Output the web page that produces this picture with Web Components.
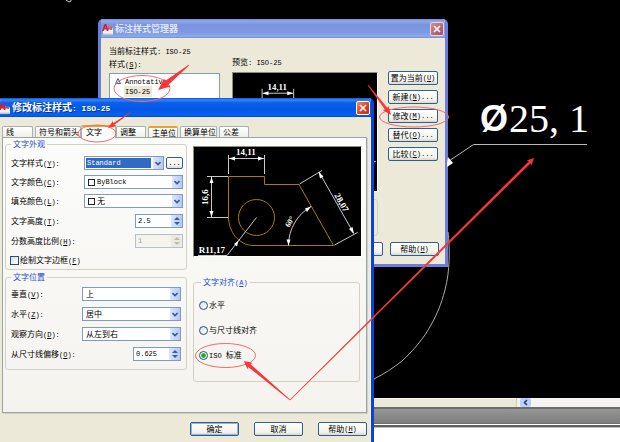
<!DOCTYPE html>
<html lang="zh-CN">
<head>
<meta charset="utf-8">
<title>修改标注样式: ISO-25</title>
<style>
html, body { height: 100%; margin: 0; }
body { background: #000; overflow: hidden; }
</style>
</head>
<body>
<cad-desktop></cad-desktop>
<script>
const BASE = `
  *, *::before, *::after { box-sizing: border-box; }
  .a { font-family: "Liberation Mono", monospace; font-size: 7px; white-space: pre; }
  button, input, select { font: inherit; color: inherit; margin: 0; padding: 0; border-radius: 0; }
`;
/* Wraps Latin runs in a monospace span; "_X" marks the mnemonic letter X. */
const fmt = s => (s || '').replace(/[\x20-\x7e]+/g, m =>
  `<span class="a">${m.replace(/_(.)/g, '<u>$1</u>')}</span>`);

function define(name, css, html, after) {
  customElements.define(name, class extends HTMLElement {
    connectedCallback() {
      if (this.shadowRoot) return;
      const get = (n, d = '') => this.getAttribute(n) ?? d;
      const root = this.attachShadow({ mode: 'open' });
      root.innerHTML = `<style>${BASE}${css}</style>${html(get, this)}`;
      if (after) after(root, get, this);
    }
  });
}

define('xp-text', `:host { display: block; line-height: 12px; white-space: nowrap; }`,
  g => fmt(g('text')));

define('xp-button', `
  :host { display: block; height: 14px; }
  button { width: 100%; height: 100%; display: flex; align-items: center; justify-content: center;
    border: 1px solid #2f5f90; border-radius: 2px; background: linear-gradient(#fff, #f3f2ec 75%, #dcd8cb);
    line-height: 12px; white-space: nowrap; overflow: hidden; outline: 0; }
  :host([primary]) button { box-shadow: inset 0 0 0 1px #93b3ea; }
`, g => `<button type="button" aria-label="${g('name', g('text').replace('_', ''))}">${fmt(g('text'))}</button>`);

define('app-icon', `:host { display: block; width: 11px; height: 11px; } svg { display: block; }`,
  () => `<svg width="11" height="11" viewBox="0 0 11 11" aria-hidden="true">
    <path d="M1 5h8l2-1v6l-1 1H1z" fill="#f4f2f2"/><path d="M1 9.500h9.500V11H1z" fill="#c9c3cf"/>
    <path d="M0 7 2.500 0h1.800L6.500 7H4.800l-.5-1.500h-2L1.800 7zM2.800 4.200h1L3.300 2.200z" fill="#d8222a"/>
    <path d="M6 2.500h1.500V6H6zM8.200 3.200h2V6h-2z" fill="#e0525a"/></svg>`);

define('xp-window', `
  :host { display: flex; flex-direction: column; border: 3px solid #6a7ede; border-top: 0;
    border-radius: 5px 5px 0 0; background: #ece9d8; overflow: hidden; }
  :host([active]) { border-color: #0a41e2; box-shadow: inset -1px 0 #f7f4e6; }
  header { display: flex; align-items: center; gap: 2px; height: 19px; flex: none; margin: 0 -2px;
    padding: 1px 3px 0 3px; color: #dfe6fb; font-size: 9px; font-weight: bold;
    background: linear-gradient(#6f87d6, #90a8ec 10%, #7b93de 30%, #7e9ae2 70%, #8aa9ea 92%, #7288d8); }
  :host([active]) header { padding-left: 1px; color: #fff; font-size: 10px; text-shadow: 1px 1px #0a3598;
    background: linear-gradient(#1150cf, #3487fb 10%, #0b5fea 25%, #0457e4 60%, #0563f6 90%, #0347c9); }
  header .a { font-size: 8px; }
  h1 { flex: 1; margin: 0; font: inherit; line-height: 14px; white-space: nowrap; }
  header button { width: 14px; height: 14px; border: 1px solid #e6d8e6; border-radius: 2px; display: grid;
    place-items: center; background: linear-gradient(135deg, #cf8d93, #a84a5a); }
  :host([active]) header button { border-color: #fff; background: linear-gradient(135deg, #f0896a, #d8401c 60%, #c03010); }
  main { flex: 1; display: flex; flex-direction: column; min-height: 0; }
`, g => `<header><app-icon></app-icon><h1>${fmt(g('title-text'))}</h1>
  <button type="button" aria-label="关闭窗口"><svg width="8" height="8" viewBox="0 0 8 8"><path d="M1 1l6 6M7 1L1 7" stroke="#fff" stroke-width="1.600"/></svg></button>
  </header><main><slot></slot></main>`);

define('xp-group', `
  :host { display: block; }
  fieldset { margin: 0; min-width: 0; border: 1px solid #d3d2c2; border-radius: 3px; padding: var(--pad); }
  legend { margin-left: var(--legend-left, 2px); padding: 0 2px; color: #1a4bd0; line-height: 12px; white-space: nowrap; }
  div { display: flex; flex-direction: column; gap: var(--row-gap, 5px); }
`, g => `<fieldset><legend>${fmt(g('legend'))}</legend><div><slot></slot></div></fieldset>`);

const CHEVRON = `<svg width="6" height="5" viewBox="0 0 6 5"><path d="M.5 1 3 3.500 5.500 1" fill="none" stroke="#3f5b94" stroke-width="1.600"/></svg>`;

define('xp-select', `
  :host { display: flex; align-items: center; height: 14px; justify-content: space-between; }
  label { line-height: 12px; white-space: nowrap; }
  .row { display: flex; gap: 2px; width: var(--field, 99px); height: 14px; }
  .box { flex: 1; min-width: 0; display: grid; grid-template: 100% / 100%; border: 1px solid #7f9db9; background: #fff; height: 14px; }
  .box > * { grid-area: 1 / 1; }
  select { appearance: none; border: 0; outline: 0; width: 100%; height: 12px; line-height: 12px; padding-left: 3px; background: transparent; }
  select.latin { font-family: "Liberation Mono", monospace; font-size: 7px; }
  select.swatched { padding-left: 12px; }
  select.focus { margin: 1px 0 0 1px; height: 10px; line-height: 10px; padding-left: 1px; width: calc(100% - 13px); background: #316ac5; color: #fff; }
  i { justify-self: start; align-self: center; width: 7px; height: 7px; margin-left: 3px; border: 1px solid #222; pointer-events: none; }
  b { justify-self: end; width: 10px; height: 12px; display: grid; place-items: center; pointer-events: none;
    background: linear-gradient(90deg, #dce6fe, #b4c9f8); }
  xp-button { width: 17px; height: 12px; margin-top: 1px; }
`, g => `<label for="f">${fmt(g('label'))}</label><div class="row"><div class="box">
  <select id="f" class="${/^[\x20-\x7e]+$/.test(g('value')) ? 'latin' : ''} ${g('kind')}"><option>${g('value')}</option></select>
  ${g('kind') === 'swatched' ? '<i></i>' : ''}<b>${CHEVRON}</b></div>
  ${g('kind') === 'focus' ? '<xp-button text="..." name="浏览"></xp-button>' : ''}</div>`);

define('xp-spin', `
  :host { display: flex; align-items: center; height: 14px; justify-content: space-between; margin-top: var(--spin-top, 1px); }
  label { line-height: 12px; white-space: nowrap; }
  .box { display: flex; width: 48px; height: 14px; border: 1px solid #7f9db9; background: #fff; }
  input { flex: 1; min-width: 0; border: 0; outline: 0; padding-left: 2px; background: transparent;
    font-family: "Liberation Mono", monospace; font-size: 7px; }
  .btns { width: 11px; display: grid; grid-template-rows: 1fr 1fr; }
  button { border: 0; display: grid; place-items: center; background: linear-gradient(90deg, #dce6fe, #b4c9f8); color: #3f5b94; }
  :host([off]) .box { background: #f4f3ec; border-color: #b3c1cf; }
  :host([off]) input { color: #a09f92; }
  :host([off]) button { background: #eceade; color: #bbb9a9; }
  svg { display: block; }
`, g => { const d = g('off', null) !== null ? 'disabled' : ''; return `<label for="f">${fmt(g('label'))}</label>
  <div class="box"><input id="f" type="text" value="${g('value')}" ${d}><div class="btns">
  <button type="button" aria-label="增加" ${d}><svg width="6" height="4"><path d="M0 4 3 1l3 3z" fill="currentColor"/></svg></button>
  <button type="button" aria-label="减少" ${d}><svg width="6" height="4"><path d="M0 0h6L3 3z" fill="currentColor"/></svg></button>
  </div></div>`; });

define('xp-choice', `
  :host { display: block; height: 14px; }
  label { display: flex; align-items: center; gap: 1px; height: 14px; line-height: 12px; white-space: nowrap; }
  input { appearance: none; flex: none; width: 9px; height: 9px; border: 1px solid #1d5281; background: linear-gradient(135deg, #dcdcd7, #fff); }
  input[type=radio] { border-radius: 50%; }
  input[type=radio]:checked { background: radial-gradient(circle, #21a121 0 1px, #3fbf3f 2px, #fff 3px); }
`, g => `<label><input type="${g('kind')}" name="align" ${g('on', null) !== null ? 'checked' : ''}><span>${fmt(g('text'))}</span></label>`);

define('xp-tabs', `
  :host { display: flex; align-items: flex-end; height: 12px; }
  button { height: 11px; padding: 0 0 0 3px; text-align: left; border: 1px solid #a5b2b8; border-bottom: 0; border-radius: 2px 2px 0 0;
    background: linear-gradient(#fff, #f0efe6); line-height: 10px; white-space: nowrap; overflow: hidden; margin-right: 2px; }
  .hot { border-top: 2px solid #f0a030; line-height: 9px; }
  .on { height: 13px; margin: 0 0 -1px -2px; background: #fbfbf9; border-top: 2px solid #f0a030; position: relative; line-height: 9px; padding-bottom: 2px; padding-left: 4px; }
`, () => [['线', 31], ['符号和箭头', 46], ['文字', 35, 'on'], ['调整', 30], ['主单位', 30, 'hot'], ['换算单位', 37], ['公差', 30]]
  .map(([t, w, c = '']) => `<button type="button" role="tab" class="${c}" style="width:${w}px">${t}</button>`).join(''));

define('dim-preview', `
  :host { display: block; border: 1px solid #8d8c80; border-right-color: #fff; border-bottom-color: #fff; background: #000; }
  svg { display: block; width: 100%; height: auto; }
  text { font: bold 8px "Liberation Serif", serif; fill: #fff; text-anchor: middle; }
`, () => `<svg viewBox="194 147 167 109" role="img" aria-label="标注预览">
  <g fill="none" stroke="#a87a10">
    <path d="M228.500 217V176.500h36v8h34.500L333.500 245.500H253C239 245 228.500 232 228.500 217z"/><circle cx="256.500" cy="217.500" r="18"/></g>
  <g fill="none" stroke="#c8c8c8">
    <path d="M228.500 155v19M264.500 155v19M229 158.500h35M207 176.500h21M207 217.500h21M211.500 177v40"/>
    <path d="M256.500 217.500 227 255.500h-29M299.500 184 322 170.500M334.500 245l23-12.500M319 172l34.500 61M288.500 245.500A45 45 0 0 1 311 206.500"/></g>
  <path fill="#fff" d="M229 158.500l6-2v4zM264 158.500l-6-2v4zM211.500 177l-2 6h4zM211.500 217l-2-6h4zM238.500 240.500l-1.500 6-3-2.500zM318.500 171.500l5 5-3.500 2zM354 234l-5-5 3.500-2zM288.500 245.500l-2-6h4zM311 206.500l-6 2 2 3.500z"/>
  <text x="246" y="155" style="font-size:9px">14,11</text><text x="212" y="253" style="font-size:9px">R11,17</text>
  <text transform="translate(208 197) rotate(-90)" style="font-size:9px">16,6</text>
  <text transform="translate(292 223) rotate(-60)">60°</text>
  <text transform="translate(339 204) rotate(60)" style="font-size:9px">28,07</text></svg>`);

define('style-manager', `
  xp-window { height: 100%; }
  :host { display: block; }
  .cols { display: grid; grid-template-columns: 111px 1fr 50px; column-gap: 10px; padding: 19px 7px 0 8px; }
  .left, .mid, .cmds { display: flex; flex-direction: column; }
  .left xp-text:first-child { margin: -12px 0 0; }
  .mid { margin-top: -1px; padding-left: 2px; }
  .list { margin: 2px 0 0; padding: 2px 5px; list-style: none; background: #fff; border: 1px solid #7f9db9; height: 120px; }
  li { display: flex; align-items: center; height: 10px; gap: 4px; }
  li svg { width: 6px; height: 6px; }
  li span { display: block; width: 6px; }
  li.sel xp-text { background: #ece9d8; padding: 0 1px; margin-left: -1px; line-height: 10px; width: 28px; }
  .pv { margin-top: 3px; height: 120px; background: #000; border: 1px solid #8d8c80; border-right-color: #fff; border-bottom-color: #fff; }
  .pv svg { display: block; width: 100%; height: 118px; }
  .pv text { font: bold 9px "Liberation Serif", serif; fill: #fff; }
  .cmds { gap: 5px; padding-top: 14px; }
  .note { margin: 6px 67px 0 8px; height: 37px; border: 1px solid #d3d2c2; border-radius: 3px; }
  footer { display: flex; justify-content: flex-end; gap: 7px; padding: 6px 6px 0; }
  footer xp-button { width: 49px; }
`, () => `<xp-window title-text="标注样式管理器">
  <div class="cols">
   <div class="left"><xp-text text="当前标注样式: ISO-25"></xp-text><xp-text text="样式(_S):"></xp-text>
    <ul class="list"><li><svg viewBox="0 0 6 6"><path d="M3 .5 5.500 5.500h-5z" fill="#dfe9f5" stroke="#3a6ea5"/></svg><xp-text text="Annotative"></xp-text></li>
    <li class="sel"><span></span><xp-text text="ISO-25"></xp-text></li><li><span></span><xp-text text="Standard"></xp-text></li></ul></div>
   <div class="mid"><xp-text text="预览: ISO-25"></xp-text><div class="pv"><svg viewBox="0 0 146 118" preserveAspectRatio="xMinYMin">
     <path d="M29.500 16v18M61.500 16v18M30 20.500h31M141 90.500l4-1" stroke="#ccc" fill="none"/><path d="M30 20.500l6-2v4zM61 20.500l-6-2v4z" fill="#fff"/>
     <text x="35" y="17">14,11</text></svg></div></div>
   <div class="cmds"><xp-button text="置为当前(_U)"></xp-button><xp-button text="新建(_N)..."></xp-button><xp-button text="修改(_M)..."></xp-button><xp-button text="替代(_O)..."></xp-button><xp-button text="比较(_C)..."></xp-button></div>
  </div><div class="note"></div>
  <footer><xp-button name="关闭"></xp-button><xp-button text="帮助(_H)"></xp-button></footer></xp-window>`);

define('modify-dialog', `
  :host { display: block; }
  xp-window { height: 100%; }
  .body { flex: 1; display: flex; flex-direction: column; padding: 8px 4px 6px 2px; }
  .page { flex: 1; display: grid; grid-template-columns: 182fr 169fr; column-gap: 6px; padding: 0 4px 0 2px;
    border: 1px solid #98a4a8; box-shadow: 1px 1px #d2d0c2; background: linear-gradient(#fcfcfb, #f4f3ee); }
  .col { display: flex; flex-direction: column; }
  .look { --pad: 6px 3px 2px 3px; }
  .look xp-choice { margin: 0 0 0 1px; }
  .place { --pad: 4px 5px 8px 3px; --row-gap: 6px; --spin-top: 0px; margin-top: 1px; }
  .place xp-select, .look xp-select, .place xp-spin, .look xp-spin { padding-left: 2px; }
  .align { --pad: 9px 3px 19px 5px; --row-gap: 11px; margin: 19px 2px 0 0; }
  dim-preview { margin-top: 8px; }
  footer { display: flex; justify-content: flex-end; gap: 15px; padding-top: 9px; }
  footer xp-button { width: 49px; }
`, () => `<xp-window active title-text="修改标注样式: ISO-25"><div class="body">
  <xp-tabs role="tablist"></xp-tabs>
  <div class="page"><div class="col">
   <xp-group class="look" legend="文字外观">
    <xp-select label="文字样式(_Y):" value="Standard" kind="focus"></xp-select>
    <xp-select label="文字颜色(_C):" value="ByBlock" kind="swatched"></xp-select>
    <xp-select label="填充颜色(_L):" value="无" kind="swatched"></xp-select>
    <xp-spin label="文字高度(_T):" value="2.5"></xp-spin>
    <xp-spin label="分数高度比例(_H):" value="1" off></xp-spin>
    <xp-choice kind="checkbox" text="绘制文字边框(_F)"></xp-choice>
   </xp-group>
   <xp-group class="place" legend="文字位置">
    <xp-select label="垂直(_V):" value="上"></xp-select>
    <xp-select label="水平(_Z):" value="居中"></xp-select>
    <xp-select label="观察方向(_D):" value="从左到右"></xp-select>
    <xp-spin label="从尺寸线偏移(_O):" value="0.625"></xp-spin>
   </xp-group></div>
   <div class="col"><dim-preview></dim-preview>
   <xp-group class="align" legend="文字对齐(_A)">
    <xp-choice kind="radio" text="水平"></xp-choice><xp-choice kind="radio" text="与尺寸线对齐"></xp-choice>
    <xp-choice kind="radio" text="ISO 标准" on></xp-choice></xp-group></div>
  </div>
  <footer><xp-button primary text="确定"></xp-button><xp-button text="取消"></xp-button><xp-button text="帮助(_H)"></xp-button></footer>
  </div></xp-window>`);

/* Tapered red arrow: a point at the tail, widening to the shaft end w, with a head of length hl and half-width hw. */
function arrow(x1, y1, x2, y2, w, hl, hw) {
  const l = Math.hypot(x2 - x1, y2 - y1), ux = (x2 - x1) / l, uy = (y2 - y1) / l;
  const p = (d, s) => `${(x1 + ux * d - uy * s).toFixed(1)},${(y1 + uy * d + ux * s).toFixed(1)}`;
  return `<polygon points="${[p(0, .4), p(l - hl, w), p(l - hl - 1, hw), p(l, 0), p(l - hl - 1, -hw), p(l - hl, -w), p(0, -.4)].join(' ')}"/>`;
}

define('red-marks', `:host { display: block; pointer-events: none; } svg { display: block; width: 100%; height: 100%; }`,
  () => `<svg viewBox="0 0 620 442" aria-hidden="true"><g fill="none" stroke="#f26a6a">
   <ellipse cx="142" cy="88.500" rx="28" ry="13"/><ellipse cx="97" cy="133.500" rx="19" ry="8.500"/>
   <ellipse cx="414" cy="117" rx="34.500" ry="10"/><ellipse cx="225.500" cy="355.500" rx="30" ry="12"/></g>
   <g fill="#fb3535">${arrow(189, 65, 158, 90, 2.500, 11, 5)}${arrow(131, 112, 108, 128, 1, 7, 3)}${arrow(368, 85, 391, 115, 1.500, 8, 3.500)}
   ${arrow(290, 400, 244, 361, 1.800, 7, 4)}${arrow(290, 400, 534, 158, 1.400, 6, 3.500)}</g></svg>`);

define('cad-drawing', `:host { display: block; } svg { display: block; width: 100%; height: 100%; }
  text { fill: #fff; }
  .sym { font: bold 36px "Liberation Sans", sans-serif; }
  .num { font: 40px "Liberation Serif", serif; }
`, () => `<svg viewBox="0 0 620 442"><path d="M66 0l3 2 2-1v-1" stroke="#ccc" fill="none"/>
  <path d="M448 232C450 250 450 270 445 290 441 305 437 314 431 325 424 338 413 351 402 361 393 368 384 374 374 379" fill="none" stroke="#aaa"/>
  <path d="M587 144.500H473.500L449 161" fill="none" stroke="#bbb"/><path d="M447 163l1-6 5 6-6 4z" fill="#fff"/>
  <text class="sym" x="480" y="131">Ø</text><text class="num" x="509" y="132">25, 1</text></svg>`);

define('status-strip', `
  :host { display: block; background: #fff; }
  .scroll { display: flex; height: 9px; background: #f5f4f0; }
  .tabs { width: 142px; margin-left: 374px; background: #ece9d8; border-top: 1px solid #f8f6ec; }
  .gap { width: 4px; background: #f5f3e8; border-left: 1px solid #d0cdbc; }
  button { width: 11px; height: 9px; border: 0; display: grid; place-items: center; background: #bccefa; border-radius: 2px; }
  .bar { height: 17px; border: 2px solid #6d6d6d; border-width: 2px 0 1px; background: linear-gradient(#969696, #7d7d7d); }
  .line { height: 2px; margin-top: 1px; background: #5e5e5e; }
  .rest { height: 15px; border-top: 1px solid #bbb; }
`, () => `<div class="scroll"><div class="tabs"></div><div class="gap"></div><button type="button" aria-label="向左滚动"><svg width="5" height="7"><path d="M4 1 1.500 3.500 4 6" fill="none" stroke="#26386a" stroke-width="1.500"/></svg></button></div>
  <div class="bar"></div><div class="line"></div><div class="rest"></div>`);

define('cad-desktop', `
  :host { display: flex; flex-direction: column; justify-content: flex-end; position: relative; height: 100%; min-height: 442px; overflow: hidden;
    background: #000; color: #000; font: 8px "Noto Sans CJK SC", "Liberation Sans", sans-serif; }
  cad-drawing, red-marks { position: absolute; inset: 0; }
  style-manager { position: absolute; left: 98px; top: 19px; width: calc(60% - 22px); height: 248px; }
  modify-dialog { position: absolute; left: -3px; top: 98px; bottom: -3px; width: calc(60% + 5px); }
`, () => `<status-strip></status-strip><style-manager></style-manager><cad-drawing></cad-drawing><modify-dialog></modify-dialog><red-marks></red-marks>`);
</script>
</body>
</html>
